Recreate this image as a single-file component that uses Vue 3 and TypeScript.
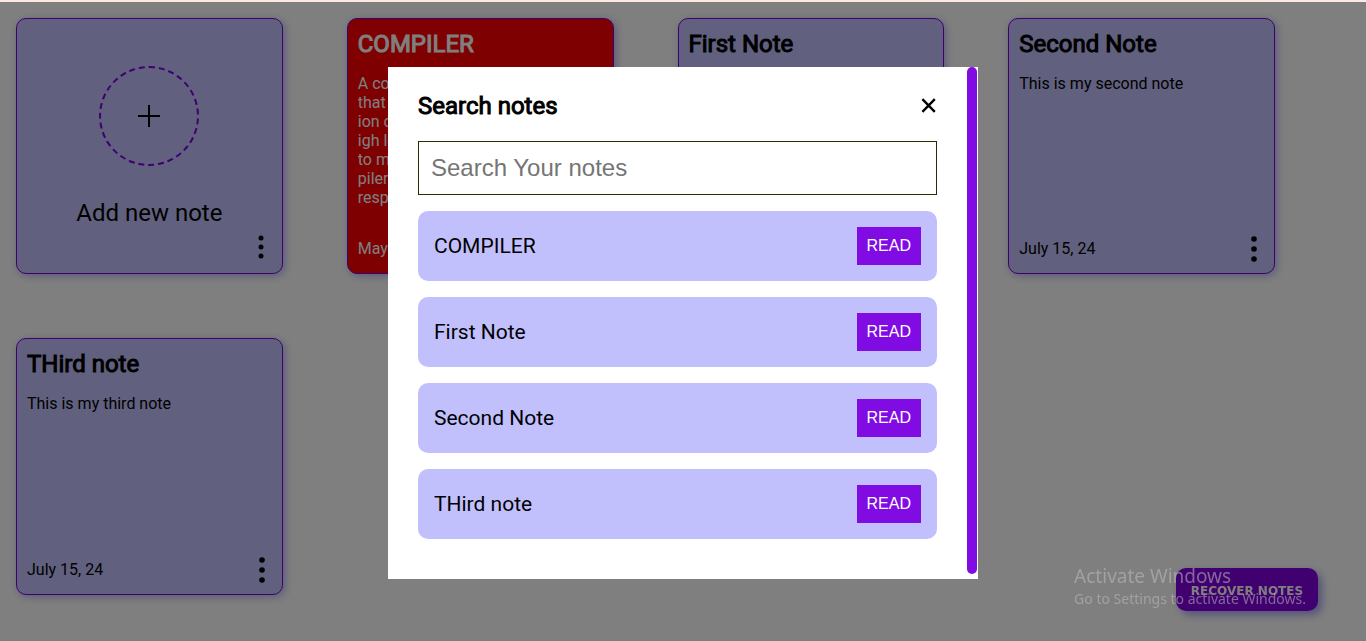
<script setup lang="ts">
import { computed, ref } from 'vue'

interface Note {
  id: number
  title: string
  body: string
  date: string
  important?: boolean
}

const notes: Note[] = [
  {
    id: 1,
    title: 'COMPILER',
    body: 'A compiler is a program\nthat performs the convers\nion of code written in a h\nigh level language in\nto machine code. The com\npiler reads the code and\nresponds with errors',
    date: 'May 15, 24',
    important: true,
  },
  { id: 2, title: 'First Note', body: 'This is my first note', date: 'July 15, 24' },
  { id: 3, title: 'Second Note', body: 'This is my second note', date: 'July 15, 24' },
  { id: 4, title: 'THird note', body: 'This is my third note', date: 'July 15, 24' },
]

const query = ref('')
const open = ref(true)
const results = computed(() =>
  notes.filter((n) => n.title.toLowerCase().includes(query.value.toLowerCase())),
)
</script>

<template>
  <div class="page">
    <main class="grid">
      <section class="card add">
        <button class="circle" type="button" aria-label="Add new note">
          <svg width="22" height="22" viewBox="0 0 22 22"><path d="M11 0v22M0 11h22" stroke="#000" stroke-width="2" /></svg>
        </button>
        <p class="add-label">Add new note</p>
        <button class="dots" type="button" aria-label="Options">
          <svg width="6" height="24" viewBox="0 0 6 24"><circle cx="3" cy="3" r="2.5" /><circle cx="3" cy="12" r="2.5" /><circle cx="3" cy="21" r="2.5" /></svg>
        </button>
      </section>
      <article v-for="note in notes" :key="note.id" class="card" :class="{ important: note.important }">
        <h2 class="title">{{ note.title }}</h2>
        <p class="body">{{ note.body }}</p>
        <footer class="foot">
          <time>{{ note.date }}</time>
          <button class="more" type="button" aria-label="Note options">
            <svg width="6" height="26" viewBox="0 0 6 26"><circle cx="3" cy="3" r="2.8" /><circle cx="3" cy="13" r="2.8" /><circle cx="3" cy="23" r="2.8" /></svg>
          </button>
        </footer>
      </article>
    </main>
    <button class="recover" type="button">RECOVER NOTES</button>
  </div>

  <div v-if="open" class="overlay">
    <div class="modal" role="dialog" aria-labelledby="search-title">
      <div class="content">
        <header class="head">
          <h2 id="search-title" class="title">Search notes</h2>
          <button class="close" type="button" aria-label="Close" @click="open = false">
            <svg width="15" height="15" viewBox="0 0 15 15"><path d="M1.4 1.2l12.4 12.6M13.8 1.2L1.4 13.8" stroke="#000" stroke-width="2.4" /></svg>
          </button>
        </header>
        <input v-model="query" class="search" type="text" placeholder="Search Your notes" aria-label="Search Your notes" />
        <ul class="results">
          <li v-for="note in results" :key="note.id" class="result">
            <span>{{ note.title }}</span>
            <button class="read" type="button">READ</button>
          </li>
        </ul>
      </div>
      <div class="track"><div class="thumb"></div></div>
    </div>
  </div>

  <aside class="watermark">
    <p class="wm-title">Activate Windows</p>
    <p class="wm-text">Go to Settings to activate Windows.</p>
  </aside>
</template>

<style>
body {
  margin: 0;
  background: #fff;
  font-family: Roboto, "Liberation Sans", sans-serif;
}
</style>

<style scoped>
* {
  box-sizing: border-box;
}
h2,
p,
ul {
  margin: 0;
  padding: 0;
}
button {
  border: 0;
  padding: 0;
  background: none;
  cursor: pointer;
}
svg {
  display: block;
}
.page {
  min-height: 100vh;
  border-top: 2px solid #fbe9e2;
}
.grid {
  display: grid;
  grid-template-columns: repeat(4, 1fr);
  gap: 64px;
  padding: 16px 91px 16px 16px;
}
.card {
  display: flex;
  flex-direction: column;
  min-height: 40vh;
  padding: 10px 10px 9px;
  border: 1px solid #8000e0;
  border-radius: 10px;
  background: #c3c0fc;
  box-shadow: 2px 2px 8px #b4b2f4;
  color: #000;
}
.important {
  background: #ff0000;
  color: #fff;
}
.add {
  position: relative;
  align-items: center;
  padding-top: 47px;
}
.circle {
  display: grid;
  place-items: center;
  width: 100px;
  height: 100px;
  border: 2px dashed #8000e0;
  border-radius: 50%;
}
.add-label {
  margin-top: 32px;
  font-size: 24px;
  line-height: 30px;
}
.dots {
  position: absolute;
  right: 18px;
  bottom: 14px;
}
.title {
  font-size: 24px;
  line-height: 30px;
  font-weight: 400;
  -webkit-text-stroke: 1px currentColor;
}
.body {
  margin-top: 15px;
  height: 133px;
  overflow: hidden;
  font-size: 16px;
  line-height: 19px;
  white-space: pre-line;
}
.foot {
  display: flex;
  align-items: center;
  justify-content: space-between;
  margin-top: auto;
  padding-right: 7px;
  font-size: 16px;
  line-height: 30px;
}
.recover {
  position: fixed;
  right: 48px;
  bottom: 30px;
  width: 142px;
  height: 43px;
  padding-top: 2px;
  border-radius: 10px;
  background: #8000e0;
  box-shadow: 4px 4px 8px #a8a4f0;
  color: #fff;
  font: bold 12px "DejaVu Sans", sans-serif;
}
.overlay {
  position: fixed;
  inset: 2px 0 0;
  display: grid;
  place-items: center;
  padding-top: 3px;
  background: rgba(0, 0, 0, 0.5);
}
.modal {
  display: flex;
  width: min(590px, 90vw);
  height: 80vh;
  background: #fff;
}
.content {
  flex: 1;
  padding: 24px 30px;
}
.head {
  display: flex;
  align-items: center;
  justify-content: space-between;
  height: 30px;
}
.close {
  margin-right: 1px;
}
.search {
  display: block;
  width: 100%;
  height: 54px;
  margin: 20px 0 16px;
  padding: 0 12px;
  border: 1px solid #2b2b00;
  border-radius: 0;
  outline: 0;
  background: #fff;
  font: 24px "Liberation Sans", sans-serif;
}
.search::placeholder {
  color: #757575;
}
.results {
  display: grid;
  gap: 16px;
  list-style: none;
}
.result {
  display: flex;
  align-items: center;
  justify-content: space-between;
  height: 70px;
  padding: 16px;
  border-radius: 10px;
  background: #c2c0fc;
  font-size: 21px;
}
.read {
  padding: 0 10px;
  height: 38px;
  background: #800be3;
  color: #fff;
  font: 16px "Liberation Sans", sans-serif;
}
.track {
  width: 11px;
  padding: 0 1px 5px 0;
}
.thumb {
  height: 100%;
  border-radius: 5px;
  background: #800be3;
}
.watermark {
  position: fixed;
  right: 60px;
  bottom: 31px;
  color: rgba(190, 190, 190, 0.55);
  font-family: "Noto Sans", sans-serif;
  pointer-events: none;
}
.wm-title {
  font-size: 19px;
  line-height: 24px;
}
.wm-text {
  font-size: 14px;
  line-height: 22px;
}
</style>
